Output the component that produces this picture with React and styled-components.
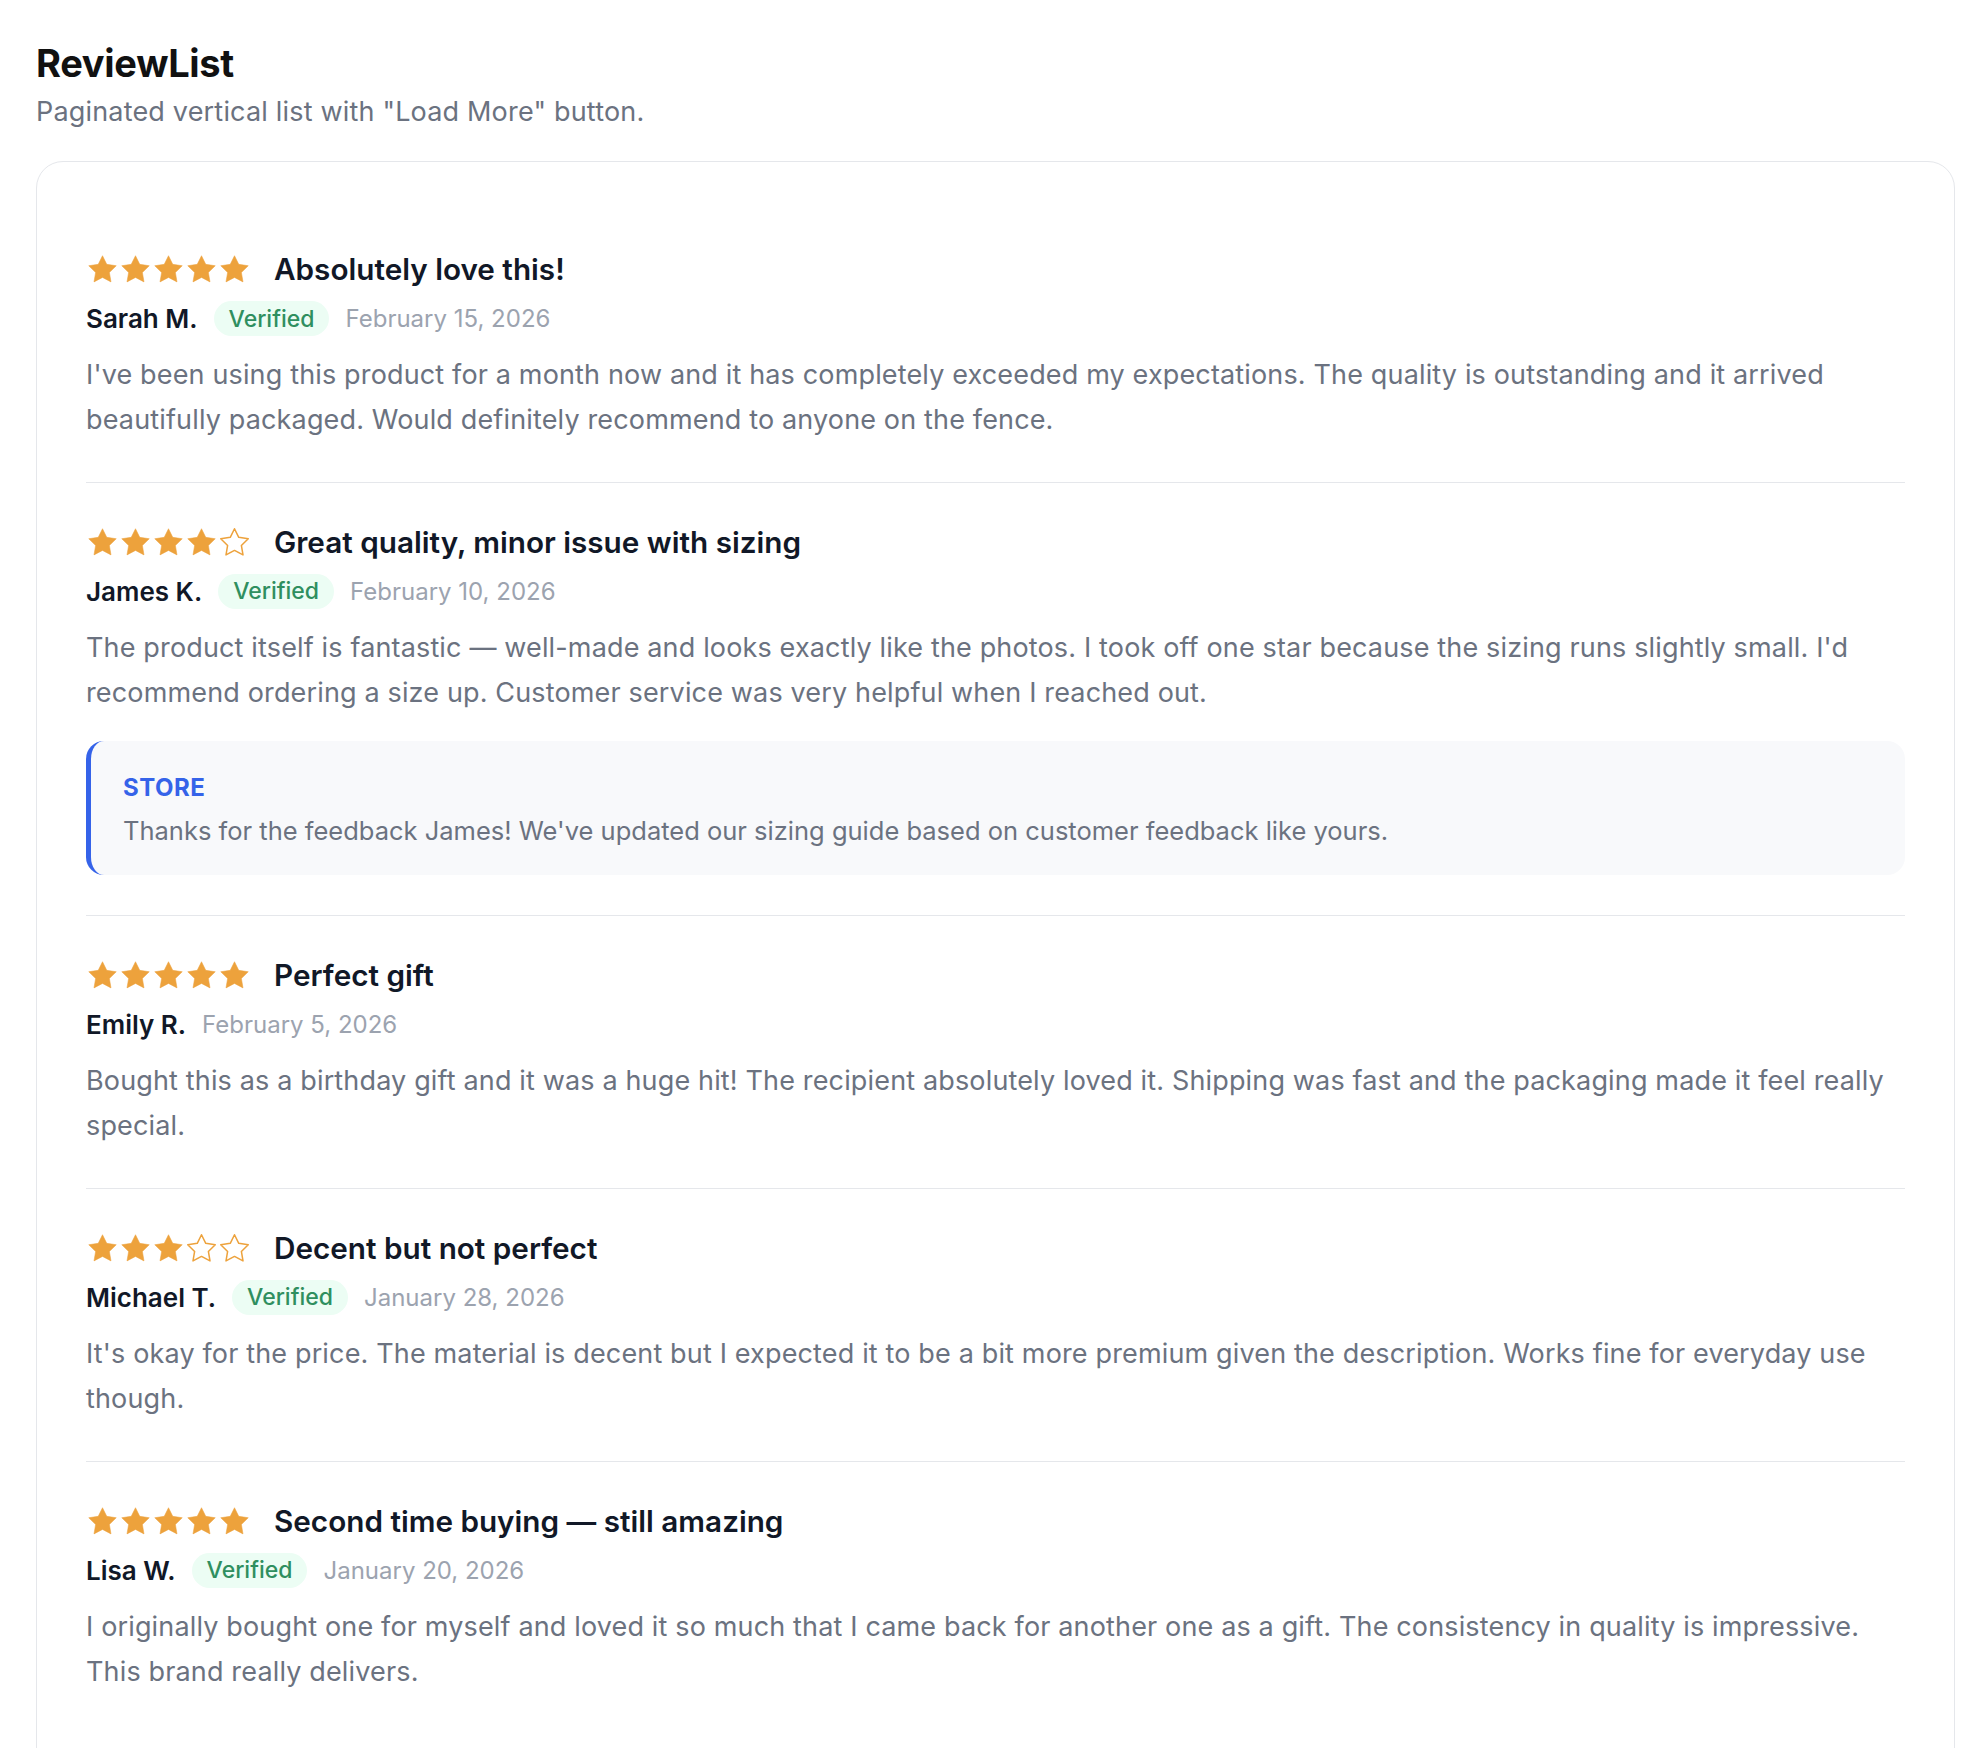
import React from 'react';
import styled, { createGlobalStyle } from 'styled-components';

const GlobalStyle = createGlobalStyle`
  html, body {
    margin: 0;
    padding: 0;
    background: #ffffff;
    font-family: Inter, "Noto Sans", "Liberation Sans", sans-serif;
  }
  * { box-sizing: border-box; }
`;

const Page = styled.div`
  padding: 41px 13px 0 36px;
`;

const Heading = styled.h1`
  margin: 0;
  font-size: 38px;
  line-height: 44px;
  font-weight: 700;
  color: #111111;
  letter-spacing: -0.3px;
`;

const Subtitle = styled.p`
  margin: 7px 0 0;
  font-size: 27px;
  line-height: 40px;
  letter-spacing: 0.18px;
  color: #6b7280;
`;

const Card = styled.div`
  margin-top: 29px;
  border: 1.5px solid #e5e7eb;
  border-radius: 27px;
  padding: 48px 49px;
  background: #fff;
`;

const ReviewItem = styled.div`
  padding: 40px 0 39.5px;
  border-bottom: ${(p) => (p.last ? 'none' : '1.5px solid #e5e7eb')};
`;

const Header = styled.div`
  display: flex;
  align-items: center;
  gap: 23px;
  height: 39px;
`;

const Stars = styled.div`
  display: flex;
  gap: 0;
`;

const Title = styled.h3`
  margin: 0;
  font-size: 29.7px;
  line-height: 39px;
  font-weight: 600;
  color: #111827;
`;

const Meta = styled.div`
  display: flex;
  align-items: center;
  gap: 16px;
  margin-top: 12px;
  height: 35px;
`;

const Author = styled.span`
  font-size: 26px;
  font-weight: 600;
  color: #111827;
`;

const Badge = styled.span`
  display: inline-flex;
  align-items: center;
  height: 35px;
  padding: 0 15px;
  border-radius: 18px;
  background: #ecfdf4;
  color: #2f8f5f;
  font-size: 23px;
  font-weight: 500;
`;

const DateText = styled.span`
  font-size: 24px;
  color: #9ca3af;
`;

const Body = styled.p`
  margin: 16px 0 0;
  font-size: 27px;
  line-height: 45.2px;
  letter-spacing: 0.15px;
  color: #6b7280;
`;

const Reply = styled.div`
  margin-top: 26px;
  background: #f8f9fb;
  border-left: 5px solid #3563e9;
  border-radius: 18px;
  padding: 30px 32px 24px;
`;

const ReplyLabel = styled.div`
  font-size: 24px;
  line-height: 33px;
  font-weight: 700;
  letter-spacing: 0.5px;
  color: #3563e9;
`;

const ReplyText = styled.p`
  margin: 7px 0 0;
  font-size: 25.5px;
  line-height: 40px;
  color: #6b7280;
`;

const STAR = 'M12 2l3.09 6.26L22 9.27l-5 4.87 1.18 6.88L12 17.77l-6.18 3.25L7 14.14 2 9.27l6.91-1.01L12 2z';

const Star = ({ filled }) => (
  <svg width="33" height="33" viewBox="0 0 24 24">
    <path
      d={STAR}
      fill={filled ? '#eda23c' : 'none'}
      stroke="#eda23c"
      strokeWidth={filled ? 0.4 : 1.1}
      strokeLinejoin="round"
    />
  </svg>
);

const reviews = [
  {
    rating: 5,
    title: 'Absolutely love this!',
    author: 'Sarah M.',
    verified: true,
    date: 'February 15, 2026',
    body: "I've been using this product for a month now and it has completely exceeded my expectations. The quality is outstanding and it arrived beautifully packaged. Would definitely recommend to anyone on the fence.",
  },
  {
    rating: 4,
    title: 'Great quality, minor issue with sizing',
    author: 'James K.',
    verified: true,
    date: 'February 10, 2026',
    body: "The product itself is fantastic — well-made and looks exactly like the photos. I took off one star because the sizing runs slightly small. I'd recommend ordering a size up. Customer service was very helpful when I reached out.",
    reply: "Thanks for the feedback James! We've updated our sizing guide based on customer feedback like yours.",
  },
  {
    rating: 5,
    title: 'Perfect gift',
    author: 'Emily R.',
    verified: false,
    date: 'February 5, 2026',
    body: 'Bought this as a birthday gift and it was a huge hit! The recipient absolutely loved it. Shipping was fast and the packaging made it feel really special.',
  },
  {
    rating: 3,
    title: 'Decent but not perfect',
    author: 'Michael T.',
    verified: true,
    date: 'January 28, 2026',
    body: "It's okay for the price. The material is decent but I expected it to be a bit more premium given the description. Works fine for everyday use though.",
  },
  {
    rating: 5,
    title: 'Second time buying — still amazing',
    author: 'Lisa W.',
    verified: true,
    date: 'January 20, 2026',
    body: 'I originally bought one for myself and loved it so much that I came back for another one as a gift. The consistency in quality is impressive. This brand really delivers.',
  },
];

const Review = ({ review, last }) => (
  <ReviewItem last={last}>
    <Header>
      <Stars>
        {[1, 2, 3, 4, 5].map((n) => (
          <Star key={n} filled={n <= review.rating} />
        ))}
      </Stars>
      <Title>{review.title}</Title>
    </Header>
    <Meta>
      <Author>{review.author}</Author>
      {review.verified && <Badge>Verified</Badge>}
      <DateText>{review.date}</DateText>
    </Meta>
    <Body>{review.body}</Body>
    {review.reply && (
      <Reply>
        <ReplyLabel>STORE</ReplyLabel>
        <ReplyText>{review.reply}</ReplyText>
      </Reply>
    )}
  </ReviewItem>
);

const App = () => (
  <Page>
    <GlobalStyle />
    <Heading>ReviewList</Heading>
    <Subtitle>Paginated vertical list with "Load More" button.</Subtitle>
    <Card>
      {reviews.map((r, i) => (
        <Review key={r.author} review={r} last={i === reviews.length - 1} />
      ))}
    </Card>
  </Page>
);

export default App;
